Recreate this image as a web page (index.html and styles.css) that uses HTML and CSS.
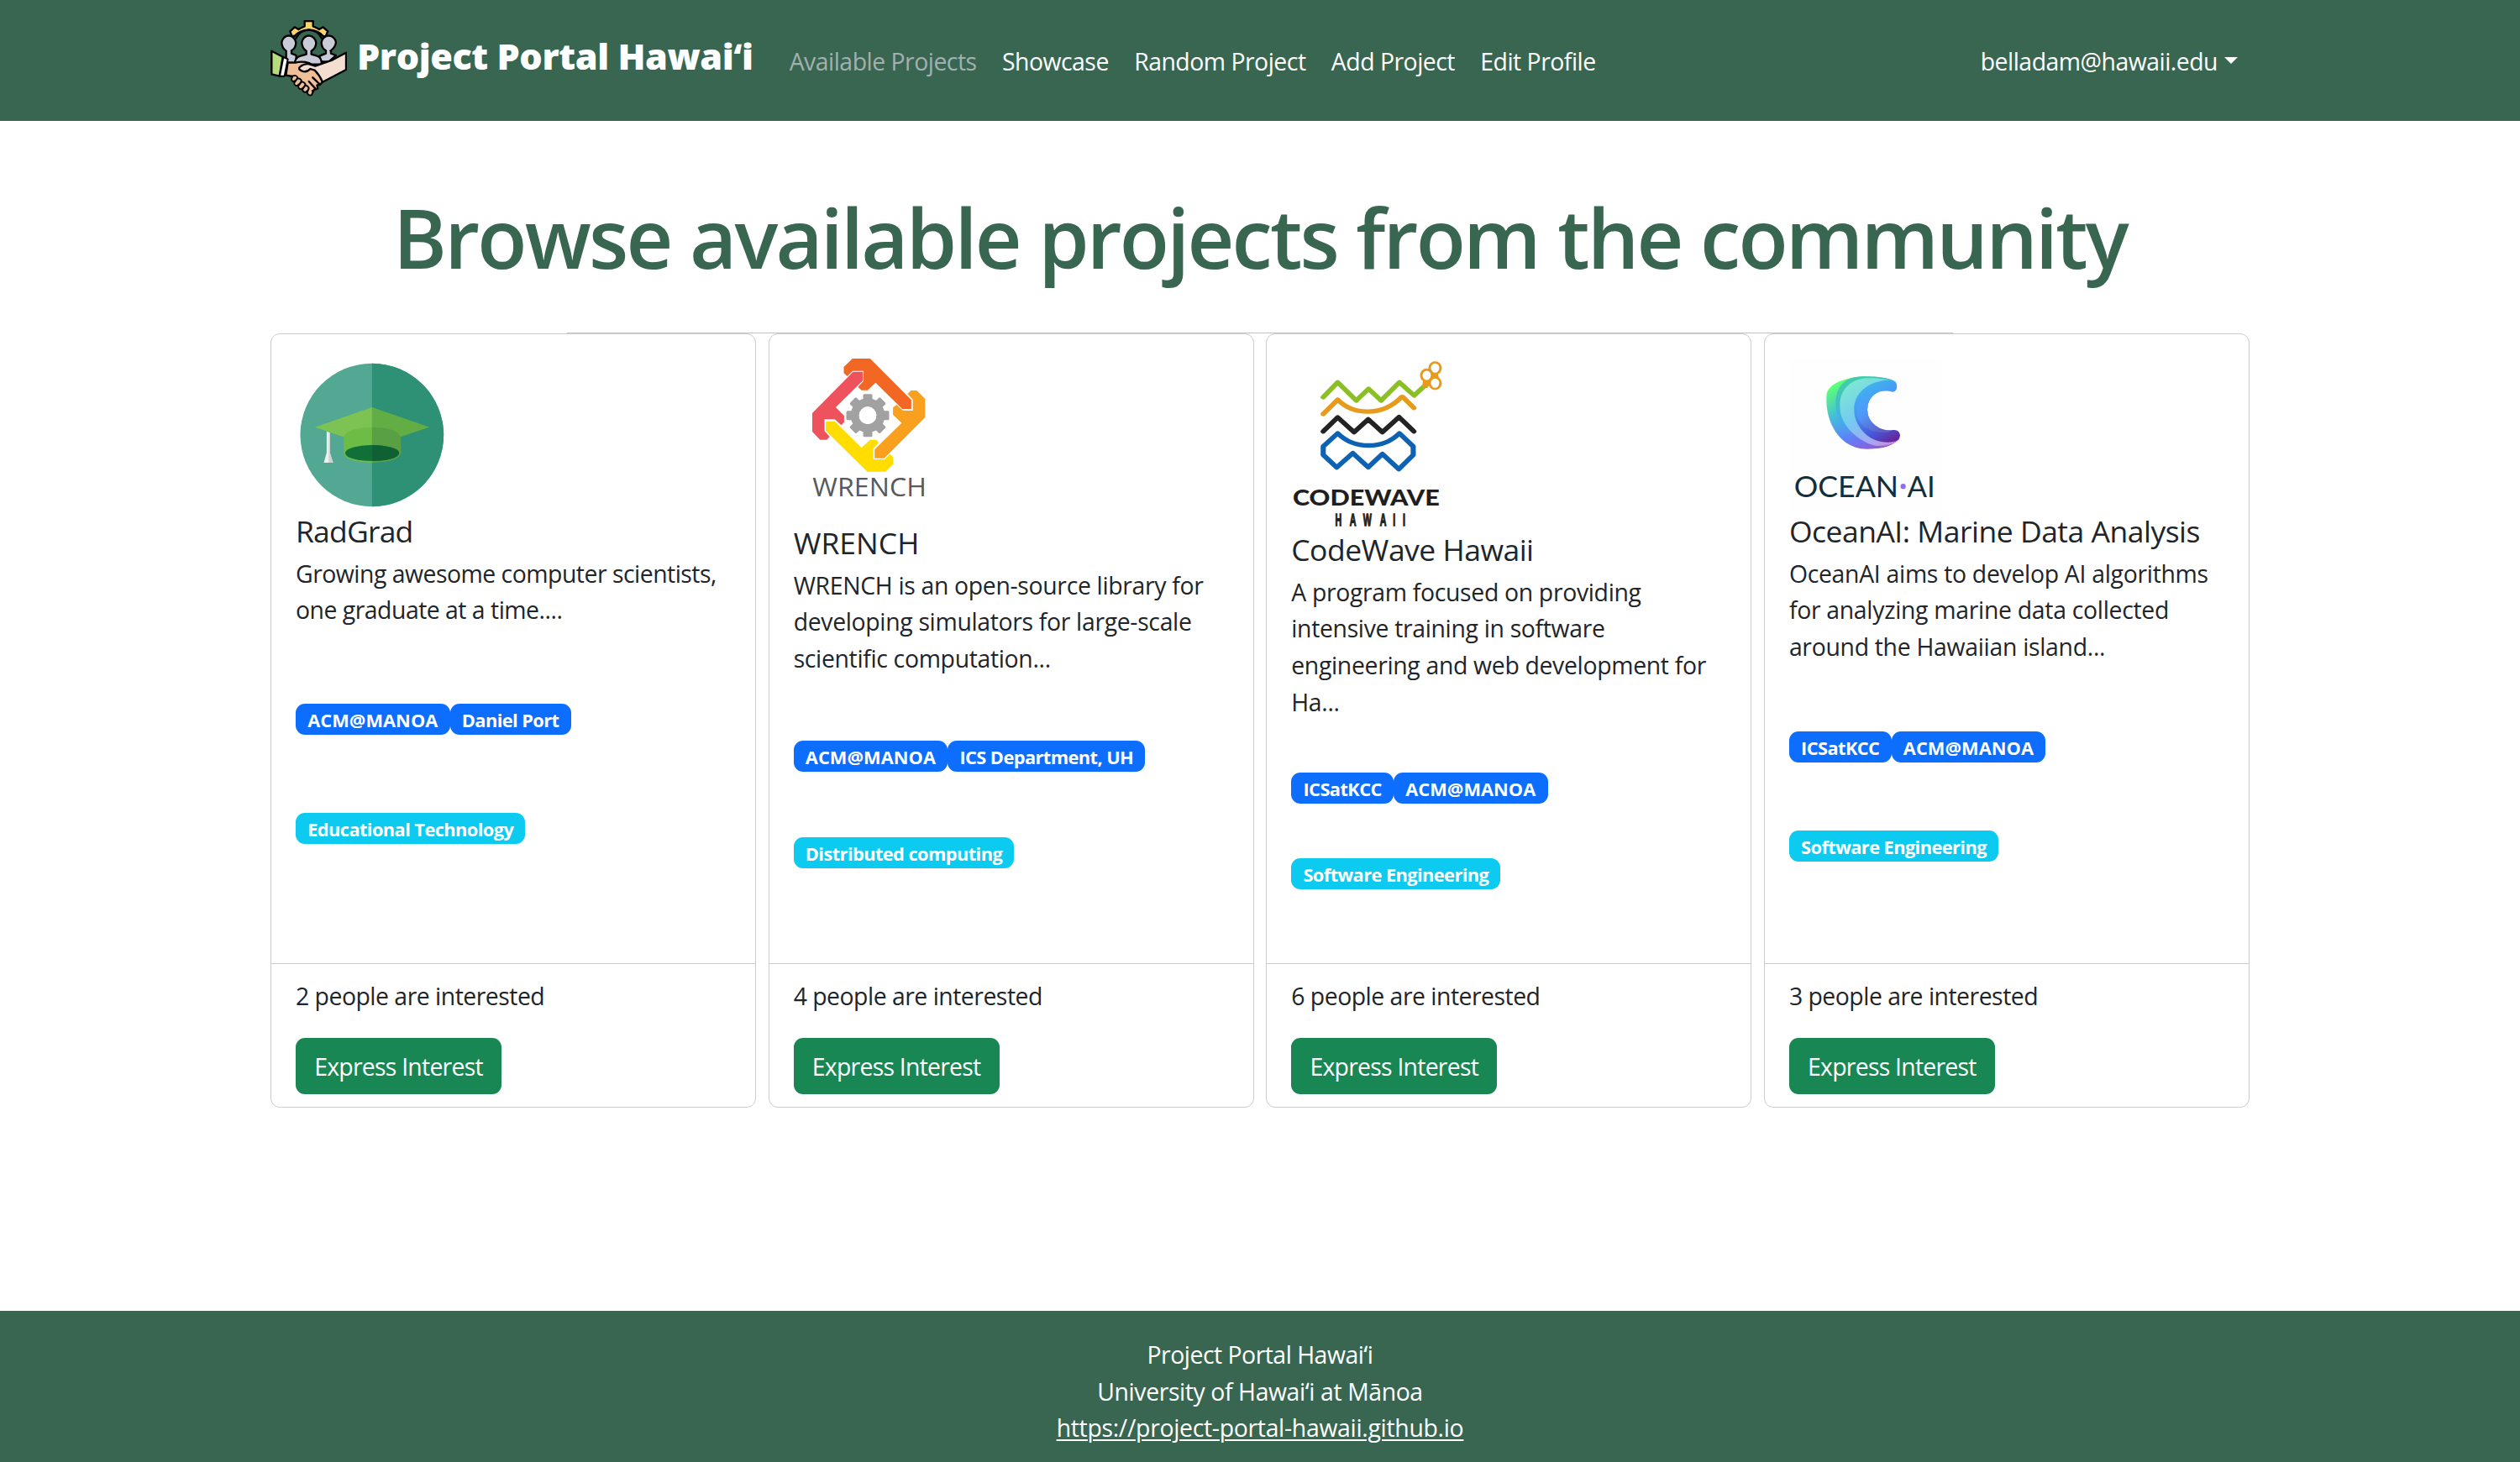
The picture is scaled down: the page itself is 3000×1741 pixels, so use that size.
FILE: index.html
```html
<!DOCTYPE html>
<html lang="en">
<head>
<meta charset="utf-8">
<title>Project Portal Hawaiʻi</title>
<link rel="stylesheet" href="styles.css">
</head>
<body>
<header class="navbar">
  <div class="container navbar-inner">
    <a class="brand">
      <svg class="brand-icon" viewBox="36 42 273 273" fill="none" stroke="#000" stroke-width="7" stroke-linejoin="round" stroke-linecap="round">
        <path fill="#fbd46d" d="M112 98L106 82L122 67L136 75Q147 68 158 64V45H188V64Q200 68 210 75L224 67L241 82L233 100L224 99Q208 78 173 76Q138 78 122 99Z"/>
        <path d="M128 106Q140 79 173 77Q206 79 218 106"/>
        <path fill="#c9ccd6" d="M92 195V152Q76 140 76 122Q80 99 101 97Q122 99 127 122Q127 141 111 151V161L128 168V195Z"/>
        <path fill="#c9ccd6" d="M250 195V152Q267 140 270 122Q266 99 244 97Q222 99 218 122Q218 141 234 151V161L217 168V195Z"/>
        <path fill="#c9ccd6" d="M252 151V161L270 168L245 190H212V170L234 161"/>
        <path fill="#c9ccd6" d="M122 200Q124 172 146 169L164 164V152Q148 141 148 122Q152 99 173 97Q194 99 199 122Q199 141 182 152V164L200 169Q219 173 219 200Z"/>
        <path fill="#efbf98" d="M98 193L124 194Q150 187 174 195L196 209L219 252L221 264L212 273L202 274L205 286L192 290L187 299L176 303L115 243L91 239Z"/>
        <path fill="#f4decf" d="M306 158V219L222 263Q211 238 194 221L178 216Q166 230 149 224Q133 218 141 209Q158 196 174 199L196 206L258 184Z"/>
        <path fill="#b5dd7c" d="M40 152L80 173L68 242L40 235Z"/>
        <path fill="#fff" stroke-width="6" d="M82 174L98 181L86 242L69 242Z"/>
        <path fill="#efbf98" stroke-width="5.5" d="M116 241L112 249Q109 259 118 261Q126 260 133 248Q130 237 116 241ZM132 251L121 265Q120 276 131 276Q141 271 147 259Q143 248 132 251ZM147 262L135 278Q137 290 147 288Q157 282 161 271Q156 261 147 262ZM160 275L150 290Q153 301 162 299Q172 292 173 284Q168 275 160 275ZM173 287L167 301Q172 314 183 309Q189 299 185 294"/>
        <path d="M187 247L213 272M173 261L199 289"/>
      </svg>
      <span class="brand-name">Project Portal Hawaiʻi</span>
    </a>
    <nav class="nav-links">
      <a class="nav-link active">Available Projects</a>
      <a class="nav-link">Showcase</a>
      <a class="nav-link">Random Project</a>
      <a class="nav-link">Add Project</a>
      <a class="nav-link">Edit Profile</a>
    </nav>
    <a class="nav-link account">belladam@hawaii.edu<span class="caret"></span></a>
  </div>
</header>

<main class="container">
  <h1 class="page-title">Browse available projects from the community</h1>
  <hr class="divider">
  <div class="card-grid">
    <article class="card card-radgrad">
      <div class="card-body">
        <div class="card-media">
          <svg class="logo" viewBox="83.6 111 475.6 546" preserveAspectRatio="none">
            <ellipse cx="321" cy="384" rx="223" ry="255.500" fill="#52a892"/>
            <path fill="#2e9176" d="M321 128.500A223 255.500 0 0 1 321 639.500Z"/>
            <path fill="#7dc353" d="M143 356L321 285V425Z"/>
            <path fill="#62ae45" d="M500 356L321 285V425Z"/>
            <path fill="#6dbc45" d="M233 392Q242 358 321 357V483Q238 481 233 448Z"/>
            <path fill="#59a044" d="M411 392Q402 358 321 357V483Q405 481 411 448Z"/>
            <ellipse cx="321.500" cy="448.500" rx="84" ry="28.500" fill="#116f38"/>
            <path fill="#0f6134" d="M321.500 420A84 28.500 0 0 1 321.500 477Z"/>
            <path fill="#eef1f0" d="M180 371L190 376V447L200 483H171L180 447Z"/>
            <path fill="#cdd5d3" d="M187 374L190 376V447L200 483H186Z"/>
          </svg>
        </div>
        <h2 class="card-title">RadGrad</h2>
        <p class="card-text">Growing awesome computer scientists, one graduate at a time....</p>
        <div class="badges"><span class="badge wide">ACM@MANOA</span><span class="badge">Daniel Port</span></div>
        <div class="badges"><span class="badge info">Educational Technology</span></div>
      </div>
      <footer class="card-footer"><p class="interest">2 people are interested</p><button class="btn">Express Interest</button></footer>
    </article>

    <article class="card card-wrench">
      <div class="card-body">
        <div class="card-media">
          <svg class="logo" viewBox="91.5 111 475.6 588" preserveAspectRatio="none">
            <path fill="#f26724" d="M274 111H329L457 259V291H429L346 197L321 224H302L291 212L308 192V155H275L258 174L247 163V141Z"/>
            <path fill="#f9a01f" d="M456 225H474L500 255V321L373 467H343V436L427 341L400 311V286L411 276L432 297H462V257L445 238Z"/>
            <path fill="#fd0" d="M191 335H219L302 430L329 401H348L356 411L339 431V471H373L391 452L401 464V488L376 515H320L191 369Z"/>
            <path fill="#ee525c" d="M276 158H306V190L222 285L248 315V338L239 349L219 328H187V370L203 390L194 401H173L149 372V306Z"/>
            <g transform="translate(321.500 314) scale(2.613 3)" fill="#a1a1a1">
              <path id="teeth" d="M-5.500 -24.500Q-5 -25.500 -4 -25.500H4Q5 -25.500 5.500 -24.500V-15H-5.500ZM-5.500 24.500Q-5 25.500 -4 25.500H4Q5 25.500 5.500 24.500V15H-5.500Z"/>
              <use href="#teeth" transform="rotate(45)"/>
              <use href="#teeth" transform="rotate(90)"/>
              <use href="#teeth" transform="rotate(135)"/>
              <circle r="15.300" fill="none" stroke="#a1a1a1" stroke-width="10"/>
              <circle r="10.300" fill="#fff"/>
            </g>
            <text class="wrench-word" x="150" y="603" textLength="354" lengthAdjust="spacingAndGlyphs">WRENCH</text>
          </svg>
        </div>
        <h2 class="card-title">WRENCH</h2>
        <p class="card-text">WRENCH is an open-source library for developing simulators for large-scale scientific computation...</p>
        <div class="badges"><span class="badge wide">ACM@MANOA</span><span class="badge">ICS Department, UH</span></div>
        <div class="badges"><span class="badge info">Distributed computing</span></div>
      </div>
      <footer class="card-footer"><p class="interest">4 people are interested</p><button class="btn">Express Interest</button></footer>
    </article>

    <article class="card card-codewave">
      <div class="card-body">
        <div class="card-media">
          <svg class="logo" viewBox="96 111 475.6 612" preserveAspectRatio="none">
            <g fill="none" stroke-width="16" stroke-linecap="round" stroke-linejoin="round">
              <path stroke="#8abf26" d="M196 249L241 196L299 261L337 219L376 261L433 196L479 243L508 212"/>
              <path stroke="#e79b1c" d="M196 309L241 258C292 316 382 316 439 249Q443 247 447 252L478 287"/>
              <path stroke="#232323" d="M196 371L241 321L292 374L336 328L380 374L432 320L478 371"/>
              <path stroke="#0d62b3" d="M196 425L241 378C292 436 382 436 433 378L476 425V455L431 506L380 452L336 499L288 449L238 500L196 455Z"/>
            </g>
            <path fill="#e79b1c" d="M532 158L552 160L556 182L536 190L520 216L504 216L506 188L530 182Z"/>
            <g fill="#fff" stroke="#e79b1c" stroke-width="8">
              <ellipse cx="544" cy="145" rx="17" ry="20.500"/>
              <ellipse cx="518" cy="171" rx="17" ry="20.500"/>
              <ellipse cx="544" cy="199" rx="17" ry="20.500"/>
            </g>
            <text class="codewave-word" x="101" y="635" textLength="457" lengthAdjust="spacingAndGlyphs">CODEWAVE</text>
            <text class="codewave-place" transform="scale(.45 1)" y="708" x="518 618 712 827 918 986">HAWAII</text>
          </svg>
        </div>
        <h2 class="card-title">CodeWave Hawaii</h2>
        <p class="card-text">A program focused on providing intensive training in software engineering and web development for Ha...</p>
        <div class="badges"><span class="badge">ICSatKCC</span><span class="badge wide">ACM@MANOA</span></div>
        <div class="badges"><span class="badge info">Software Engineering</span></div>
      </div>
      <footer class="card-footer"><p class="interest">6 people are interested</p><button class="btn">Express Interest</button></footer>
    </article>

    <article class="card card-ocean">
      <div class="card-body">
        <div class="card-media">
          <svg class="logo" viewBox="104 111 475.6 546" preserveAspectRatio="none">
            <defs>
              <linearGradient id="wave-outer" x1=".1" y1="0" x2=".7" y2="1"><stop offset=".1" stop-color="#5dff77"/><stop offset=".4" stop-color="#44bfd8"/><stop offset=".7" stop-color="#5a83ff"/><stop offset="1" stop-color="#9a58d0"/></linearGradient>
              <linearGradient id="wave-edge" x1=".2" y1="0" x2=".7" y2="1"><stop offset="0" stop-color="#43cfa4"/><stop offset=".45" stop-color="#3fb0ec"/><stop offset=".8" stop-color="#6f70f2"/><stop offset="1" stop-color="#8e5fd0"/></linearGradient>
              <linearGradient id="wave-mid" x1=".2" y1="0" x2=".8" y2="1"><stop offset="0" stop-color="#7eead0"/><stop offset=".45" stop-color="#74cbf0"/><stop offset=".8" stop-color="#a0aaf4"/><stop offset="1" stop-color="#c490dc"/></linearGradient>
              <linearGradient id="wave-inner" x1=".4" y1="0" x2=".8" y2="1"><stop offset="0" stop-color="#42b4ee"/><stop offset=".35" stop-color="#4597f6"/><stop offset=".75" stop-color="#4657d8"/><stop offset="1" stop-color="#69249a"/></linearGradient>
              <linearGradient id="wave-core" x1=".2" y1="0" x2=".7" y2="1"><stop offset="0" stop-color="#42a9f4"/><stop offset=".5" stop-color="#5599fa"/><stop offset="1" stop-color="#6660c0"/></linearGradient>
            </defs>
            <rect x="107" y="114" width="468" height="540" fill="#fefefe"/>
            <path fill="url(#wave-outer)" d="M220 245C221 200 285 175 345 175C390 175 432 184 438 200Q347 215 347 295Q348 370 447 395C430 424 390 434 345 434C262 434 216 340 220 245Z"/>
            <path fill="url(#wave-edge)" d="M249 280C246 215 275 176 330 175C385 174 425 184 436 195Q347 215 347 295Q348 370 446 400C420 422 400 430 375 431C300 422 249 350 249 280Z"/>
            <path fill="url(#wave-mid)" d="M262 285C258 225 295 184 345 181C380 179 425 187 437 197Q347 215 347 295Q348 370 446 400C430 416 410 424 375 423C320 410 262 350 262 285Z"/>
            <path fill="url(#wave-inner)" d="M306 295C304 235 350 191 410 188Q437 187 439 208Q440 228 425 230C375 215 347 255 347 295C347 340 390 375 428 366Q447 364 449 386Q448 405 424 409C350 419 306 350 306 295Z"/>
            <path fill="url(#wave-core)" opacity=".75" d="M314 300C312 255 350 228 395 225C366 232 347 260 347 295C347 335 378 370 418 367Q422 374 395 375C345 374 314 340 314 300Z"/>
            <text class="ocean-word" x="119" y="605" textLength="325" lengthAdjust="spacingAndGlyphs">OCEAN</text>
            <text class="ocean-word" x="471" y="605" textLength="87" lengthAdjust="spacingAndGlyphs">AI</text>
            <ellipse cx="458.500" cy="567.500" rx="8" ry="9.500" fill="#8d6cf5"/>
          </svg>
        </div>
        <h2 class="card-title">OceanAI: Marine Data Analysis</h2>
        <p class="card-text">OceanAI aims to develop AI algorithms for analyzing marine data collected around the Hawaiian island...</p>
        <div class="badges"><span class="badge">ICSatKCC</span><span class="badge wide">ACM@MANOA</span></div>
        <div class="badges"><span class="badge info">Software Engineering</span></div>
      </div>
      <footer class="card-footer"><p class="interest">3 people are interested</p><button class="btn">Express Interest</button></footer>
    </article>
  </div>
</main>

<footer class="site-footer">
  <div>Project Portal Hawaiʻi</div>
  <div class="campus">University of Hawaiʻi at Mānoa</div>
  <a class="site-link">https://project-portal-hawaii.github.io</a>
</footer>
</body>
</html>
```
FILE: styles.css
```css
* { box-sizing: border-box; }

body {
  margin: 0;
  min-height: 1741px;
  display: flex;
  flex-direction: column;
  background: #fff;
  color: #212529;
  font-family: "Open Sans", "Noto Sans", sans-serif;
  font-size: 28.4px;
  line-height: 43.64px;
  letter-spacing: -0.5px;
}

.container {
  width: 2356px;
  margin: 0 auto;
}

/* Navigation bar */
.navbar {
  height: 144px;
  background: #386651;
  color: #fff;
}

.navbar-inner {
  display: flex;
  align-items: flex-start;
}

.brand {
  display: flex;
  padding-top: 24px;
}

.brand-icon {
  width: 91px;
  height: 91px;
}

.brand-name {
  margin-left: 12px;
  font-size: 43.2px;
  font-weight: 800;
  line-height: 86px;
  letter-spacing: -0.45px;
  white-space: nowrap;
}

.nav-links {
  display: flex;
  gap: 30.3px;
  margin-left: 43px;
  padding-top: 52px;
}

.nav-link {
  white-space: nowrap;
}

.nav-link.active {
  color: #a4b0b0;
}

.account {
  display: flex;
  margin-left: auto;
  padding: 52px 14px 0 0;
}

.caret {
  margin: 16px 0 0 8px;
  width: 16px;
  height: 9px;
  border: 8.500px solid transparent;
  border-top-color: #fff;
  border-bottom: 0;
}

/* Page heading */
.page-title {
  margin: 77px 0 0;
  font-size: 97px;
  font-weight: 570;
  line-height: 122px;
  letter-spacing: -2.8px;
  text-align: center;
  color: #386651;
  white-space: nowrap;
}

.divider {
  width: 1650px;
  height: 1px;
  margin: 53px auto 0;
  border: 0;
  background: #c2c3c4;
}

/* Project cards */
.card-grid {
  display: grid;
  grid-template-columns: repeat(4, 1fr);
  gap: 14.5px;
}

.card {
  display: flex;
  flex-direction: column;
  height: 922px;
  border: 1px solid #cbcccd;
  border-radius: 11px;
  background: #fff;
}

.card-body {
  flex: 1;
  padding: 29px 29px 0;
}

.card-media {
  height: 184px;
}

.logo {
  display: block;
  width: 182px;
  height: 182px;
}

.card-title {
  margin: 0;
  font-size: 35.5px;
  font-weight: 400;
  line-height: 43.64px;
  letter-spacing: -0.5px;
  white-space: nowrap;
}

.card-text {
  margin: 7px 0 0;
}

.badges {
  display: flex;
}

.badge {
  height: 37px;
  padding: 0 14.2px;
  border-radius: 11px;
  background: #0d6efd;
  color: #fff;
  font-size: 21.8px;
  font-weight: 700;
  line-height: 39px;
  letter-spacing: -0.58px;
}

.badge.wide {
  letter-spacing: 0.05px;
}

.badge.info {
  background: #0dcaf0;
}

.card-radgrad .card-title { letter-spacing: -0.8px; }
.card-radgrad .badges { margin-top: 89px; }
.card-radgrad .badges + .badges { margin-top: 93px; }

.card-wrench .card-media { height: 198px; }
.card-wrench .logo { height: 196px; }
.card-wrench .card-title { letter-spacing: 0; }
.card-wrench .card-text { letter-spacing: -0.33px; }
.card-wrench .badges { margin-top: 75px; }
.card-wrench .badges + .badges { margin-top: 78px; }

.card-codewave .card-media { height: 206px; }
.card-codewave .logo { height: 204px; }
.card-codewave .card-text { letter-spacing: -0.33px; }
.card-codewave .badges { margin-top: 62px; }
.card-codewave .badges + .badges { margin-top: 65px; }

.card-ocean .card-text { letter-spacing: -0.3px; }
.card-ocean .badges { margin-top: 78px; }
.card-ocean .badges + .badges { margin-top: 81px; }

.card-footer {
  height: 171px;
  padding: 17px 29px 0;
  border-top: 1px solid #cbcccd;
}

.interest {
  margin: 0 0 27.5px;
}

.btn {
  display: block;
  width: 245px;
  height: 67px;
  padding: 2px 0 0;
  border: 0;
  border-radius: 11px;
  background: #198754;
  color: #fff;
  font: inherit;
  letter-spacing: -0.75px;
}

/* Lettering inside the logos */
.wrench-word {
  fill: #58595b;
  font: 450 95px "Open Sans", sans-serif;
  letter-spacing: 0;
}

.codewave-word {
  fill: #1f1f1f;
  font: 900 81px Lato, sans-serif;
  letter-spacing: 0;
}

.codewave-place {
  fill: #1f1f1f;
  stroke: #1f1f1f;
  stroke-width: 4px;
  font: 700 62px "Liberation Sans", sans-serif;
  letter-spacing: 0;
}

.ocean-word {
  fill: #12303a;
  font: 400 105px Lato, sans-serif;
  letter-spacing: 0;
}

/* Page footer */
.site-footer {
  height: 180px;
  margin-top: auto;
  padding-top: 31px;
  background: #386651;
  color: #fff;
  text-align: center;
}

.campus {
  letter-spacing: -0.4px;
}

.site-link {
  letter-spacing: -0.3px;
  text-decoration: underline;
  text-decoration-thickness: 2px;
  text-underline-offset: 3px;
}
```
